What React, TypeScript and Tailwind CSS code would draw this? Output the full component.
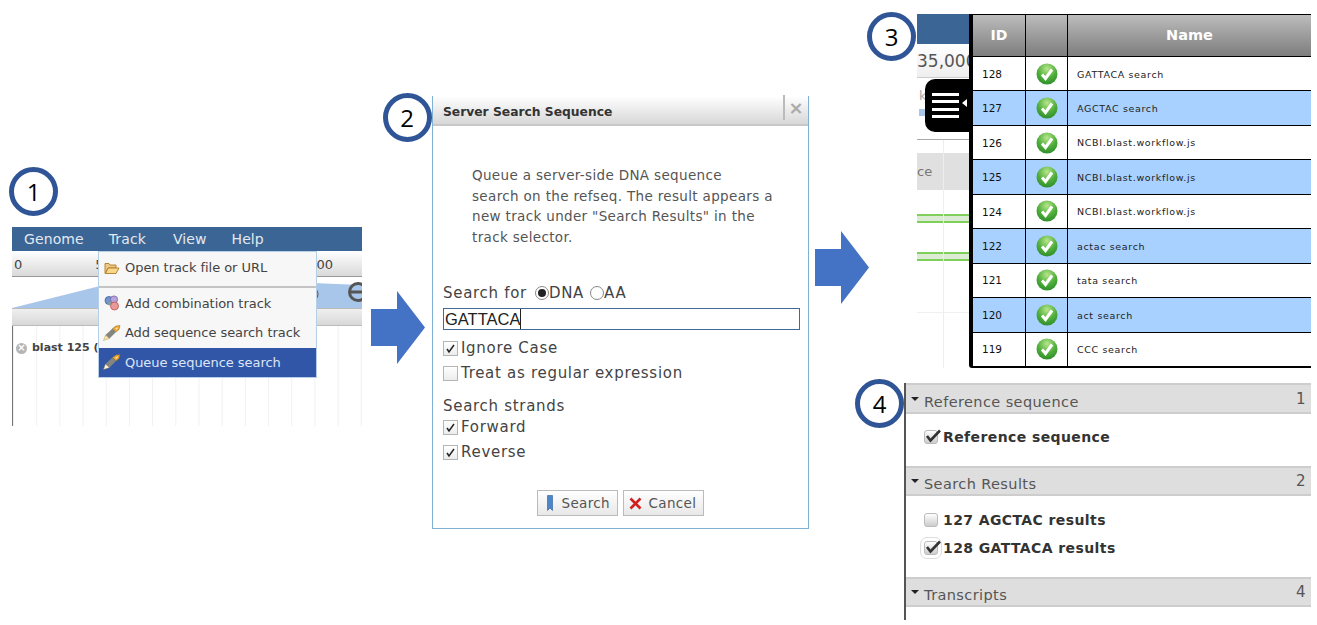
import React from "react";

const dj = "font-['DejaVu_Sans',sans-serif]";

function Circle({ n, cls }: { n: string; cls: string }) {
  return (
    <div className={`absolute z-20 flex h-[49px] w-[49px] items-center justify-center rounded-full border-[5px] border-[#2f5597] bg-white font-['Open_Sans',sans-serif] text-[24px] leading-none text-black ${cls}`}>
      {n}
    </div>
  );
}

function Arrow() {
  return (
    <svg width="54" height="73" viewBox="0 0 54 73" className="block">
      <polygon points="0,18 26,18 26,0 54,36.5 26,73 26,55 0,55" fill="#4472c4" />
    </svg>
  );
}

function FolderIcon() {
  return (
    <svg width="16" height="14" viewBox="0 0 16 14">
      <path d="M1 2.5h4l1 1.5h6V7H4L1.5 12.5H1z" fill="#edc987" stroke="#b27a22" strokeWidth="0.9" />
      <path d="M4 7h11l-3 5.5H1.5z" fill="#f8d78c" stroke="#b27a22" strokeWidth="0.9" />
    </svg>
  );
}

function PenIcon({ light }: { light?: boolean }) {
  return (
    <svg width="18" height="16" viewBox="0 0 18 16">
      <polygon points="0.5,15.5 2.5,10 6.5,13.5" fill={light ? "#fff6d2" : "#f8e2a2"} stroke="#a08c55" strokeWidth="0.4" />
      <polygon points="2.5,10 9.5,3.5 13,7 6.5,13.5" fill="#85857f" />
      <polygon points="9.5,3.5 13,1 17,0.5 16,4.5 13,7" fill="#e9a634" stroke="#9a6a18" strokeWidth="0.5" />
      <polygon points="12,4 15,2 14,4.5" fill="#fff0c0" />
    </svg>
  );
}

function ComboIcon() {
  return (
    <svg width="16" height="16" viewBox="0 0 16 16">
      <circle cx="5" cy="5.5" r="4" fill="#6f94cf" stroke="#3f5f9f" strokeWidth="0.8" />
      <circle cx="10" cy="4.5" r="3.6" fill="#b7a3d8" stroke="#7a62a8" strokeWidth="0.8" />
      <circle cx="10.5" cy="11" r="4" fill="#e89a9a" stroke="#c05050" strokeWidth="0.8" />
      <circle cx="5.5" cy="8.5" r="2" fill="#8a9a9a" />
    </svg>
  );
}

function MenuItem({ icon, label, active }: { icon: React.ReactNode; label: string; active?: boolean }) {
  return (
    <div className={`flex h-[29.5px] items-center gap-[4px] pl-[4px] text-[13px] tracking-[-0.05px] ${active ? "bg-[#3156a8] text-[#dde6f5]" : "text-[#444]"}`}>
      <span className="flex w-[18px] justify-center">{icon}</span>
      <span>{label}</span>
    </div>
  );
}

function Panel1() {
  return (
    <div className={`relative ml-[12px] mt-[227px] h-[199px] w-[350px] shrink-0 ${dj}`}>
      <Circle n="1" cls="left-[-3px] top-[-60px]" />
      <div className="flex h-[24px] items-center bg-[#3a6594] pl-[12px] text-[14px] tracking-[0.1px] text-[#e3e9f1]">
        <span>Genome</span>
        <span className="ml-[25px]">Track</span>
        <span className="ml-[27px]">View</span>
        <span className="ml-[25px]">Help</span>
      </div>
      <div className="flex h-[26px] items-center justify-between border-b border-[#999] bg-gradient-to-b from-white to-[#d9d9d9] pl-[2px] pr-[29px] pt-[2px] text-[13px] text-[#444]">
        <span>0</span>
        <span className="ml-[73px]">5</span>
        <span className="ml-auto">00</span>
      </div>
      <div className="relative h-[31px] bg-white">
        <svg width="350" height="31" viewBox="0 0 350 31" className="block">
          <polygon points="0,31 100,6 300,6 350,8 350,31" fill="#a8c6ea" />
          <circle cx="346" cy="15" r="8.5" fill="none" stroke="#555" strokeWidth="3" />
          <rect x="338" y="13.5" width="12" height="3" fill="#555" />
          <circle cx="300" cy="17" r="6" fill="none" stroke="#666" strokeWidth="1.2" />
        </svg>
      </div>
      <div className="h-[18px] border-y border-[#bbb] bg-gradient-to-b from-[#efefef] to-[#d8d8d8]" />
      <div className="flex h-[100px] flex-col border-l border-[#777] bg-[linear-gradient(90deg,#f0f0f0_1px,transparent_1px)] bg-[length:23.2px_100%] pt-[14px]">
        <div className="flex items-center gap-[5px] pl-[3px] text-[11px] font-bold text-[#444]">
          <span className="flex h-[11px] w-[11px] items-center justify-center rounded-full bg-[#b5b5b5] text-[10px] font-bold leading-none text-white">×</span>
          <span>blast 125 (</span>
        </div>
      </div>
      <div className="absolute left-[86px] top-[24px] z-10 w-[219px] border border-[#b4cfe6] bg-[#f7f7f7]">
        <div className="border-b-2 border-[#c4c4c4] pb-[3px] pt-[1px]">
          <MenuItem icon={<FolderIcon />} label="Open track file or URL" />
        </div>
        <div className="pt-[1px]">
          <MenuItem icon={<ComboIcon />} label="Add combination track" />
          <MenuItem icon={<PenIcon />} label="Add sequence search track" />
          <MenuItem icon={<PenIcon light />} label="Queue sequence search" active />
        </div>
      </div>
    </div>
  );
}

function Box({ checked }: { checked?: boolean }) {
  return (
    <span className="flex h-[15px] w-[15px] shrink-0 items-center justify-center border border-[#b5b5b5] bg-gradient-to-b from-white to-[#ececec]">
      {checked && (
        <svg width="11" height="11" viewBox="0 0 11 11">
          <path d="M2 6l2 3 5-7" fill="none" stroke="#222" strokeWidth="1.5" />
        </svg>
      )}
    </span>
  );
}

function Radio({ checked }: { checked?: boolean }) {
  return (
    <span className="flex h-[14px] w-[14px] shrink-0 items-center justify-center rounded-full border border-[#888] bg-white">
      {checked && <span className="h-[8px] w-[8px] rounded-full bg-[#222]" />}
    </span>
  );
}

function Check({ label, checked, h, gap = "gap-[3px]" }: { label: string; checked?: boolean; h: string; gap?: string }) {
  return (
    <div className={`flex items-center ${gap} ${h}`}>
      <Box checked={checked} />
      <span>{label}</span>
    </div>
  );
}

function Dialog() {
  return (
    <div className={`relative ml-[7px] mt-[96px] flex h-[433px] w-[377px] shrink-0 flex-col border-x border-b border-[#7fb0d6] bg-white text-[15px] tracking-[0.7px] text-[#444] ${dj}`}>
      <Circle n="2" cls="left-[-50px] top-[-3px]" />
      <div className="flex h-[30px] items-center justify-between border-b-2 border-[#c8c8c8] bg-gradient-to-b from-white to-[#d8d8d8] pl-[10px]">
        <span className="pt-[4px] text-[12.3px] font-bold tracking-[0px] text-[#333]">Server Search Sequence</span>
        <span className="mb-[5px] flex h-[25px] w-[25px] items-center justify-center border-l-2 border-[#bbb] text-[18px] font-bold leading-none text-[#aaa]">×</span>
      </div>
      <div className="pl-[39px] pt-[39px] text-[13.5px] leading-[20.5px] tracking-[0.34px] text-[#555]">
        Queue a server-side DNA sequence<br />
        search on the refseq. The result appears a<br />
        new track under "Search Results" in the<br />
        track selector.
      </div>
      <div className="pl-[10px] pr-[8px] pt-[35px]">
        <div className="flex h-[22px] items-center">
          <span>Search for</span>
          <span className="ml-[8px] flex items-center"><Radio checked />DNA</span>
          <span className="ml-[6px] flex items-center"><Radio />AA</span>
        </div>
        <div className="mt-[4px] flex h-[22px] items-center border border-[#3d6a99] pl-[1px] font-['Liberation_Sans',sans-serif] text-[16.5px] tracking-[0px] text-[#222]">
          <span className="border-r border-[#222] leading-[20px]">GATTACA</span>
        </div>
        <div className="mt-[6px]">
          <Check label="Ignore Case" checked h="h-[25px]" />
          <Check label="Treat as regular expression" h="h-[25px]" />
        </div>
        <div className="mt-[10px] flex h-[20px] items-center">Search strands</div>
        <Check label="Forward" checked h="h-[23px]" />
        <Check label="Reverse" checked h="h-[26px]" />
      </div>
      <div className="mt-[25px] flex justify-center gap-[5px] pr-[1px] text-[13.5px] tracking-[0.35px] text-[#555]">
        <div className="flex h-[26px] w-[81px] items-center gap-[9px] border border-[#bbb] bg-gradient-to-b from-white to-[#e8e8e8] pl-[9px]">
          <svg width="6" height="16" viewBox="0 0 6 16"><path d="M0.5 0.5h5v15l-2.5-2.5-2.5 2.5z" fill="#4a86c8" stroke="#2a5a98" strokeWidth="0.6" /></svg>
          <span>Search</span>
        </div>
        <div className="flex h-[26px] w-[81px] items-center gap-[7px] border border-[#bbb] bg-gradient-to-b from-white to-[#e8e8e8] pl-[5px]">
          <svg width="13" height="13" viewBox="0 0 13 13"><path d="M1.5 1.5l10 10M11.5 1.5l-10 10" stroke="#d02020" strokeWidth="2.6" /></svg>
          <span>Cancel</span>
        </div>
      </div>
    </div>
  );
}

function OkIcon() {
  return (
    <svg width="22" height="22" viewBox="0 0 22 22" className="block">
      <defs>
        <radialGradient id="ok" cx="50%" cy="25%" r="80%">
          <stop offset="0%" stopColor="#b8e68c" />
          <stop offset="55%" stopColor="#4fae3a" />
          <stop offset="100%" stopColor="#2a8a2a" />
        </radialGradient>
      </defs>
      <circle cx="11" cy="11" r="10.5" fill="url(#ok)" />
      <path d="M6 11.5l3.5 4 6.5-9" fill="none" stroke="#fff" strokeWidth="3" />
    </svg>
  );
}

const rows: [string, string][] = [
  ["128", "GATTACA search"],
  ["127", "AGCTAC search"],
  ["126", "NCBI.blast.workflow.js"],
  ["125", "NCBI.blast.workflow.js"],
  ["124", "NCBI.blast.workflow.js"],
  ["122", "actac search"],
  ["121", "tata search"],
  ["120", "act search"],
  ["119", "CCC search"],
];

function Panel3() {
  return (
    <div className={`relative ml-[13px] mt-[14px] flex h-[354px] w-[394px] ${dj}`}>
      <Circle n="3" cls="left-[-50px] top-[-2px]" />
      <div className="relative flex w-[52px] shrink-0 flex-col overflow-hidden bg-white text-[#555]">
        <div className="h-[30px] bg-[#3a6594]" />
        <div className="flex h-[34px] items-center whitespace-nowrap border-b border-[#ccc] bg-gradient-to-b from-white to-[#eee] pt-[2px] text-[17px]">35,000</div>
        <div className="h-[62px] border-b border-[#aaa] pl-[2px] pt-[8px] text-[13px] text-[#aaa]">
          <div className="h-[22px]">k</div>
          <div className="mt-[1px] h-[7px] bg-[#a8c6ea]" />
        </div>
        <div className="mt-[13px] flex h-[37px] items-center bg-[#e0e0e0] text-[13px] text-[#777]">ce</div>
        <div className="mt-[24px] h-[9px] border-y-2 border-[#7fd05a] bg-[#dcecd4]" />
        <div className="mt-[29px] h-[9px] border-y-2 border-[#7fd05a] bg-[#dcecd4]" />
        <div className="mt-[51px] border-t border-[#f0f0f0]" />
        <div className="absolute bottom-0 left-[26px] top-[126px] w-px bg-[#eee]" />
      </div>
      <div className="absolute left-[8px] top-[65px] z-10 flex h-[53px] w-[47px] items-center rounded-l-[10px] bg-black pl-[7px]">
        <div className="flex w-[27px] flex-col gap-[4.5px]">
          <div className="h-[3px] bg-white" />
          <div className="h-[3px] bg-white" />
          <div className="h-[3px] bg-white" />
          <div className="h-[3px] bg-white" />
        </div>
        <div className="mb-[6px] ml-[3px] h-0 w-0 border-y-[4px] border-r-[5px] border-y-transparent border-r-white" />
      </div>
      <div className="flex h-[354px] w-[342px] shrink-0 flex-col rounded-bl-[3px] border-b-2 border-l-4 border-t border-black bg-white">
        <div className="flex h-[42px] shrink-0 border-b border-black bg-gradient-to-b from-[#bcbcbc] to-[#7e7e7e] font-bold text-white">
          <div className="flex w-[53px] shrink-0 items-center justify-center border-r border-black text-[14px]">ID</div>
          <div className="w-[42px] shrink-0 border-r border-black" />
          <div className="flex flex-1 items-center justify-center text-[14.5px]">Name</div>
        </div>
        {rows.map(([id, name], i) => (
          <div key={id} className={`flex min-h-0 flex-1 border-b border-black last:border-b-0 ${i % 2 ? "bg-[#a8d1ff]" : "bg-white"}`}>
            <div className="flex w-[53px] shrink-0 items-center border-r border-black pl-[9px] pt-[2px] text-[10.5px] text-[#111]">{id}</div>
            <div className="flex w-[42px] shrink-0 items-center justify-center border-r border-black"><OkIcon /></div>
            <div className="flex flex-1 items-center pl-[9px] pt-[2px] text-[9.5px] tracking-[0.65px] text-[#222]">{name}</div>
          </div>
        ))}
      </div>
    </div>
  );
}

function SectionHead({ title, n, h }: { title: string; n: string; h: string }) {
  return (
    <div className={`flex shrink-0 items-center border-y-2 border-[#cdcdcd] bg-[#dedede] pl-[5px] pr-[5px] text-[14.5px] tracking-[0.4px] text-[#555] ${h}`}>
      <span className="mr-[5px] h-0 w-0 border-x-[4px] border-t-[4px] border-x-transparent border-t-[#222]" />
      <span className="mt-[8px]">{title}</span>
      <span className="ml-auto mt-[1px] text-[15px]">{n}</span>
    </div>
  );
}

function TrackBox({ checked, focus }: { checked?: boolean; focus?: boolean }) {
  return (
    <span className={`relative flex h-[14px] w-[14px] shrink-0 items-center justify-center rounded-[3px] border border-[#bbb] bg-gradient-to-b from-white to-[#ccc] ${focus ? "outline outline-offset-[3px] outline-[#ddd]" : ""}`}>
      {checked && (
        <svg width="17" height="14" viewBox="0 0 17 14" className="absolute left-0 top-[-2px]">
          <path d="M2 7l3.5 4.5L15 1.5" fill="none" stroke="#333" strokeWidth="2.6" />
        </svg>
      )}
    </span>
  );
}

function TrackRow({ label, checked, focus, h }: { label: string; checked?: boolean; focus?: boolean; h: string }) {
  return (
    <div className={`flex items-center gap-[5px] pl-[18px] text-[14px] font-bold tracking-[0.4px] text-[#333] ${h}`}>
      <TrackBox checked={checked} focus={focus} />
      <span>{label}</span>
    </div>
  );
}

function Panel4() {
  return (
    <div className={`relative mt-[15px] flex h-[237px] w-[407px] flex-col border-l-2 border-[#555] ${dj}`}>
      <Circle n="4" cls="left-[-51px] top-[-4px]" />
      <SectionHead title="Reference sequence" n="1" h="h-[31px]" />
      <div className="h-[52px] shrink-0 pt-[9px]">
        <TrackRow label="Reference sequence" checked h="h-[28px]" />
      </div>
      <SectionHead title="Search Results" n="2" h="h-[30px]" />
      <div className="h-[81px] shrink-0 pt-[10px]">
        <TrackRow label="127 AGCTAC results" h="h-[28px]" />
        <TrackRow label="128 GATTACA results" checked focus h="h-[28px]" />
      </div>
      <SectionHead title="Transcripts" n="4" h="h-[30px]" />
    </div>
  );
}

export default function App() {
  return (
    <div className="flex h-[625px] w-[1317px] items-start overflow-hidden bg-white">
      <Panel1 />
      <div className="ml-[9px] mt-[291px] shrink-0"><Arrow /></div>
      <Dialog />
      <div className="ml-[6px] mt-[231px] shrink-0"><Arrow /></div>
      <div className="ml-[35px] flex w-[407px] shrink-0 flex-col">
        <Panel3 />
        <Panel4 />
      </div>
    </div>
  );
}
